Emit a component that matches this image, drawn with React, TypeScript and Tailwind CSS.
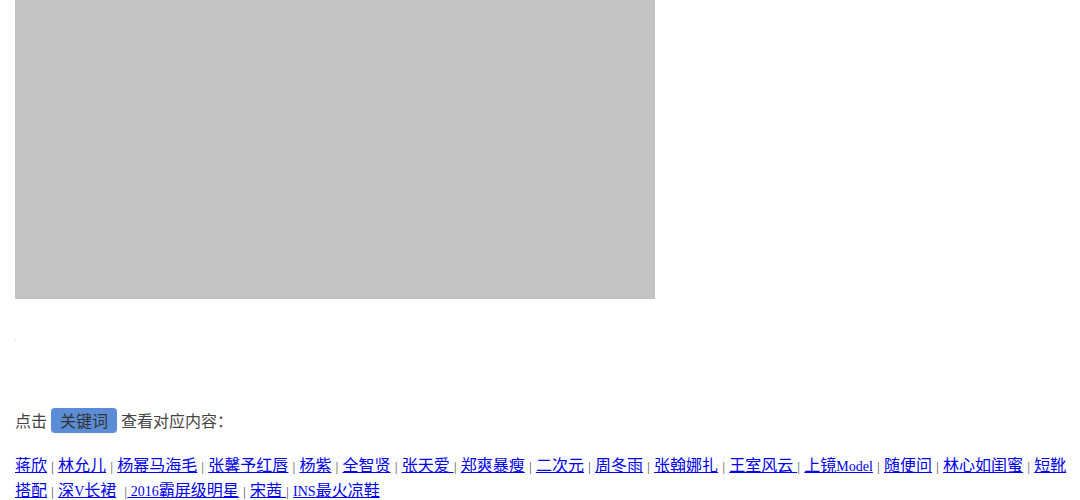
import React from "react";

type Item = { text: React.ReactNode; sep: string };

const lat = (s: string) => <span className="text-[14px]">{s}</span>;

const items: Item[] = [
  { text: "蒋欣", sep: " | " },
  { text: "林允儿", sep: " | " },
  { text: "杨幂马海毛", sep: " | " },
  { text: "张馨予红唇", sep: " | " },
  { text: "杨紫", sep: " | " },
  { text: "全智贤", sep: " | " },
  { text: "张天爱 ", sep: "| " },
  { text: "郑爽暴瘦", sep: " | " },
  { text: "二次元", sep: " | " },
  { text: "周冬雨", sep: " | " },
  { text: "张翰娜扎", sep: " | " },
  { text: "王室风云 ", sep: "| " },
  { text: <>上镜{lat("Model")}</>, sep: " | " },
  { text: "随便问", sep: " | " },
  { text: "林心如闺蜜", sep: " | " },
  { text: "短靴搭配", sep: " | " },
  { text: <>深{lat("V")}长裙</>, sep: "  |" },
  { text: <>{lat(" 2016")}霸屏级明星</>, sep: " | " },
  { text: "宋茜 ", sep: "| " },
  { text: <>{lat("INS")}最火凉鞋</>, sep: "" },
];

export default function App() {
  return (
    <div className="bg-white min-h-[500px] pl-[15px] w-[1069px] font-['Liberation_Serif','Noto_Sans_CJK_SC',serif]">
      {/* placeholder banner */}
      <div className="w-[640px] h-[299px] bg-[#c3c3c3]" />

      <div className="mt-[41px] w-px h-px bg-[#d8d8d8]" />

      <div className="mt-[67px] flex items-center text-[16px] text-[#444] font-['Noto_Sans_CJK_SC',sans-serif] leading-[25px]">
        <span>点击</span>
        <span className="ml-[4px] mr-[4px] inline-block h-[25px] rounded-[4px] bg-[#5b8dd6] px-[9px] leading-[24px] text-[#333]">
          关键词
        </span>
        <span>查看对应内容：</span>
      </div>

      <p className="mt-[21px] text-[16px] leading-[24px] whitespace-pre-wrap">
        {items.map((it, i) => (
          <React.Fragment key={i}>
            <a href="#" className="text-[#0000ee] underline">
              {it.text}
            </a>
            {it.sep && (
              <span className="text-[#333]">
                {it.sep.split("|").map((part, j, arr) => (
                  <React.Fragment key={j}>
                    {part}
                    {j < arr.length - 1 && <span className="text-[12px] px-[0.35px]">|</span>}
                  </React.Fragment>
                ))}
              </span>
            )}
          </React.Fragment>
        ))}
      </p>
    </div>
  );
}
